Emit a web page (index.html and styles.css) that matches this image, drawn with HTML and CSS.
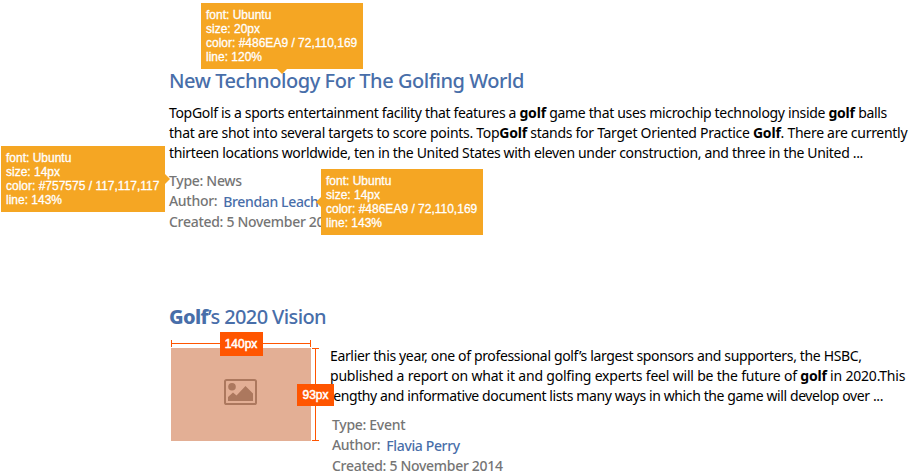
FILE: index.html
```
<!DOCTYPE html>
<html lang="en">
<head>
<meta charset="utf-8">
<title>Search results</title>
<link rel="stylesheet" href="styles.css">
</head>
<body>
<main class="results">
  <article class="result">
    <h2 class="title title-news">New Technology For The Golfing World
      <span class="note note-title">font: Ubuntu<br>size: 20px<br>color: #486EA9 / 72,110,169<br>line: 120%</span>
    </h2>
    <p class="summary">
      <span class="line t1">TopGolf is a sports entertainment facility that features a <b>golf</b> game that uses microchip technology inside <b>golf</b> balls</span>
      <span class="line t2">that are shot into several targets to score points. Top<b>Golf</b> stands for Target Oriented Practice <b>Golf</b>. There are currently</span>
      <span class="line t3">thirteen locations worldwide, ten in the United States with eleven under construction, and three in the United ...</span>
    </p>
    <div class="meta">
      <div class="type">Type: News
        <span class="note note-meta">font: Ubuntu<br>size: 14px<br>color: #757575 / 117,117,117<br>line: 143%</span>
      </div>
      <div class="author"><span>Author:</span><a>Brendan Leach</a>
        <span class="note note-link">font: Ubuntu<br>size: 14px<br>color: #486EA9 / 72,110,169<br>line: 143%</span>
      </div>
      <div class="created">Created: 5 November 2014</div>
    </div>
  </article>
  <article class="result">
    <h2 class="title title-event"><b>Golf</b>’s 2020 Vision</h2>
    <div class="media">
      <div class="thumb">
        <svg class="picture" viewBox="0 0 33 26" width="33" height="26">
          <rect x="1" y="1" width="31" height="24" rx="1.6" fill="none" stroke="#ac785e" stroke-width="2"/>
          <circle cx="8" cy="7.8" r="3.8" fill="#ac785e"/>
          <path d="M4 22v-4l5-4.500 3.500 3L21.500 7 29 14.500V22z" fill="#ac785e"/>
        </svg>
        <div class="measure measure-w"><span>140px</span></div>
        <div class="measure measure-h"><span>93px</span></div>
      </div>
      <div class="body">
        <p class="summary">
          <span class="line t4">Earlier this year, one of professional golf’s largest sponsors and supporters, the HSBC,</span>
          <span class="line t5">published a report on what it and golfing experts feel will be the future of <b>golf</b> in 2020.This</span>
          <span class="line t6">lengthy and informative document lists many ways in which the game will develop over ...</span>
        </p>
        <div class="meta">
          <div class="type">Type: Event</div>
          <div class="author"><span>Author:</span><a>Flavia Perry</a></div>
          <div class="created">Created: 5 November 2014</div>
        </div>
      </div>
    </div>
  </article>
</main>
</body>
</html>
```
FILE: styles.css
```
body { margin: 0; background: #fff; overflow: hidden; font-family: "Noto Sans", sans-serif; }
.results { display: flex; flex-direction: column; gap: 73px; padding: 69px 0 0 169px; white-space: nowrap; }
.title { position: relative; width: max-content; margin: 0; color: #486ea9; font-size: 20px; line-height: 24px; font-weight: 500; }
.title-news { letter-spacing: -0.44px; }
.title-event { letter-spacing: -0.61px; }
.title b { font-weight: 800; }
.summary { margin: 10px 0 8px; color: #000; font-size: 14px; line-height: 20px; }
.summary b { font-weight: 700; letter-spacing: -0.2px; }
.line { display: block; }
.t1 { letter-spacing: -0.325px; }
.t2 { letter-spacing: -0.285px; }
.t3 { letter-spacing: -0.334px; }
.t4 { letter-spacing: -0.35px; }
.t5 { letter-spacing: -0.2px; }
.t6 { letter-spacing: -0.396px; }
.meta { width: max-content; color: #757575; font-size: 14px; line-height: 20px; font-weight: 500; letter-spacing: -0.3px; }
.type, .author { position: relative; width: max-content; }
.author { display: flex; height: 21px; gap: 6px; }
.author a { position: relative; top: 1px; color: #486ea9; letter-spacing: -0.36px; }

.note { position: absolute; z-index: 2; box-sizing: border-box; height: 66px; padding: 5px; background: #f5a623; color: #fff; font: 400 12px/14px "Liberation Sans", sans-serif; letter-spacing: 0; -webkit-text-stroke: 0.3px #fff; }
.note::after { content: ""; position: absolute; border: 5px solid transparent; }
.note-title { left: 32px; top: -66px; width: 162px; }
.note-title::after { left: 76px; top: 66px; border-top-color: #f5a623; }
.note-meta { right: calc(100% + 4px); top: -25px; width: 164px; }
.note-meta::after { left: 164px; top: 28px; border-left-color: #f5a623; }
.note-link { left: 152px; top: -22px; width: 162px; }
.note-link::after { right: 162px; top: 28px; border-right-color: #f5a623; }

.media { display: flex; gap: 20px; margin-left: 2px; }
.thumb { position: relative; display: flex; box-sizing: border-box; width: 140px; height: 93px; margin-top: 19px; padding: 31px 0 0 53px; background: #e3af95; }
.body { margin-left: -1px; padding-top: 7px; }
.body .meta { margin: 9px 0 0 2px; }
.measure { position: absolute; z-index: 1; display: flex; align-items: center; justify-content: center; box-sizing: border-box; color: #fff; font: 400 12px/24px "Liberation Sans", sans-serif; -webkit-text-stroke: 0.5px #fff; }
.measure span { background: #ff5500; text-align: center; flex: none; }
.measure-w { left: 0; top: -8px; width: 140px; height: 7px; border: solid #ff5500; border-width: 0 1px; background: linear-gradient(#ff5500, #ff5500) 0 3px / 100% 1px no-repeat; }
.measure-w span { width: 43px; }
.measure-h { left: 141px; top: 0; width: 7px; height: 93px; border: solid #ff5500; border-width: 1px 0; background: linear-gradient(#ff5500, #ff5500) 3px 0 / 1px 100% no-repeat; }
.measure-h span { width: 37px; line-height: 22px; }
```
